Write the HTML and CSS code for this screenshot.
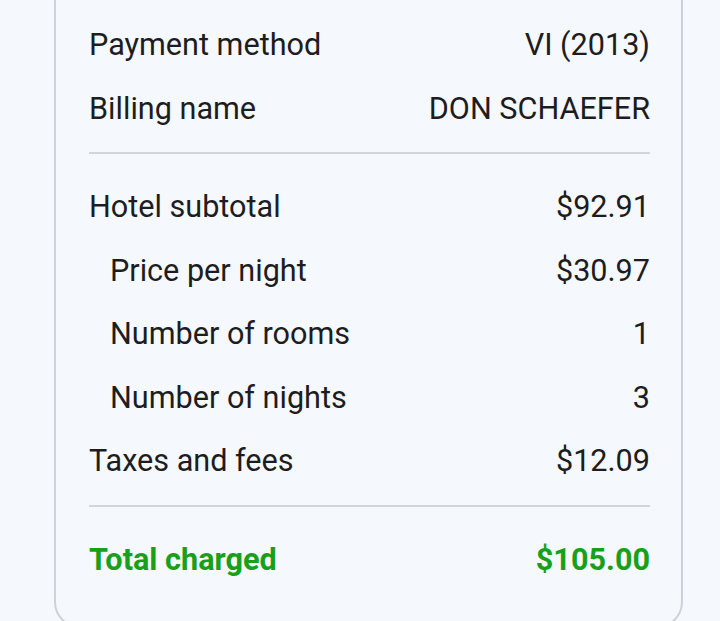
FILE: index.html
```html
<!DOCTYPE html>
<html lang="en">
  <head>
    <meta charset="UTF-8" />
    <meta name="viewport" content="width=device-width, initial-scale=1.0" />
    <title>Payment summary</title>
    <link rel="stylesheet" href="styles.css">
  </head>
  <body>
    <div class="summary-card">
      <ul class="summary-section">
        <li class="summary-row">
          <span>Payment method</span>
          <span>VI (2013)</span>
        </li>
        <li class="summary-row">
          <span>Billing name</span>
          <span>DON SCHAEFER</span>
        </li>
      </ul>
      <ul class="summary-section">
        <li class="summary-row">
          <span>Hotel subtotal</span>
          <span>$92.91</span>
        </li>
        <li class="summary-row summary-row--sub">
          <span>Price per night</span>
          <span>$30.97</span>
        </li>
        <li class="summary-row summary-row--sub">
          <span>Number of rooms</span>
          <span>1</span>
        </li>
        <li class="summary-row summary-row--sub">
          <span>Number of nights</span>
          <span>3</span>
        </li>
        <li class="summary-row">
          <span>Taxes and fees</span>
          <span>$12.09</span>
        </li>
      </ul>
      <div class="summary-total">
        <span>Total charged</span>
        <span>$105.00</span>
      </div>
    </div>
  </body>
</html>
```

FILE: styles.css
```css
* {
  box-sizing: border-box;
}

body {
  margin: 0;
  background-color: #f5f8fc;
  font-family: Roboto, "Noto Sans", sans-serif;
  color: #1d1d1f;
}

ul {
  margin: 0;
  padding: 0;
  list-style: none;
}

.summary-card {
  margin: 0 37px 0 54px;
  padding: 13px 31px 30px 33px;
  height: 628px;
  border: 2px solid #cdd2da;
  border-top: 0;
  border-radius: 0 0 26px 26px;
}

.summary-section {
  padding-bottom: 12px;
  margin-bottom: 21px;
  border-bottom: 2px solid #d2d6dc;
}

.summary-row {
  display: flex;
  justify-content: space-between;
  align-items: center;
  height: 63.5px;
  font-size: 30.6px;
}

.summary-row--sub {
  padding-left: 21px;
}

.summary-total {
  display: flex;
  justify-content: space-between;
  align-items: center;
  height: 63.5px;
  font-size: 30.6px;
  font-weight: 700;
  color: #17a11b;
}
```
